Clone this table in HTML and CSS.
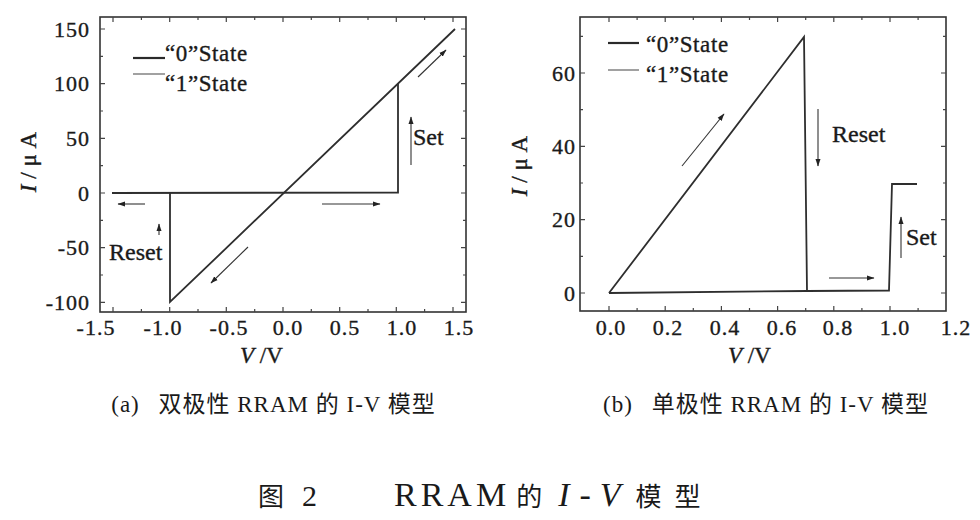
FILE: index.html
```html
<!DOCTYPE html>
<html lang="zh-CN">
<head>
<meta charset="utf-8">
<title>RRAM 的 I-V 模型</title>
<link rel="stylesheet" href="styles.css">
</head>
<body>
<div class="figure">
  <div class="panels">
    <div class="panel panel-a">
      <svg class="chart" width="490" height="380" viewBox="0 0 490 380">
        <defs>
          <marker id="ha" markerWidth="8" markerHeight="6" refX="7" refY="3" orient="auto" markerUnits="userSpaceOnUse">
            <path d="M0,0.5 L7.5,3 L0,5.5 z" class="head"/>
          </marker>
        </defs>
        <rect class="frame" x="100" y="17" width="366" height="295"/>
        <path class="ticks" d="M113 312v-5M169.7 312v-5M226.3 312v-5M283 312v-5M339.7 312v-5M396.3 312v-5M453 312v-5
          M141.4 312v-3M198 312v-3M254.7 312v-3M311.3 312v-3M368 312v-3M424.6 312v-3
          M113 17v5M169.7 17v5M226.3 17v5M283 17v5M339.7 17v5M396.3 17v5M453 17v5
          M141.4 17v3M198 17v3M254.7 17v3M311.3 17v3M368 17v3M424.6 17v3
          M100 29h5M100 83.7h5M100 138.3h5M100 193h5M100 247.7h5M100 302.3h5
          M100 56.3h3M100 111h3M100 165.7h3M100 220.3h3M100 275h3
          M466 29h-5M466 83.7h-5M466 138.3h-5M466 193h-5M466 247.7h-5M466 302.3h-5
          M466 56.3h-3M466 111h-3M466 165.7h-3M466 220.3h-3M466 275h-3"/>
        <g class="tick-y">
          <text x="90" y="37">150</text>
          <text x="90" y="91">100</text>
          <text x="90" y="145.8">50</text>
          <text x="90" y="200.5">0</text>
          <text x="90" y="255">-50</text>
          <text x="90" y="309.8">-100</text>
        </g>
        <g class="tick-x">
          <text x="96" y="335">-1.5</text>
          <text x="163" y="335">-1.0</text>
          <text x="229" y="335">-0.5</text>
          <text x="288" y="335">0.0</text>
          <text x="345" y="335">0.5</text>
          <text x="402" y="335">1.0</text>
          <text x="459" y="335">1.5</text>
        </g>
        <text class="axis-label" x="240" y="363"><tspan class="var">V</tspan> /V</text>
        <text class="axis-label" transform="translate(36 162) rotate(-90)" text-anchor="middle"><tspan class="var">I</tspan> / μ A</text>

        <path class="trace" d="M112 193 L398 192.5 L398 83.5"/>
        <path class="trace" d="M455 29 L170 302 L170 193"/>

        <line class="legend-0" x1="133" y1="58" x2="165" y2="58"/>
        <text class="legend" x="165" y="61">“0”State</text>
        <line class="legend-1" x1="133" y1="74" x2="165" y2="74"/>
        <text class="legend" x="165" y="91">“1”State</text>

        <line class="arrow" x1="145" y1="204" x2="118" y2="204" marker-end="url(#ha)"/>
        <line class="arrow" x1="322" y1="204" x2="380" y2="204" marker-end="url(#ha)"/>
        <line class="arrow" x1="411" y1="165" x2="411" y2="117" marker-end="url(#ha)"/>
        <line class="arrow" x1="159" y1="235" x2="159" y2="224" marker-end="url(#ha)"/>
        <line class="arrow" x1="418" y1="77" x2="446" y2="50" marker-end="url(#ha)"/>
        <line class="arrow" x1="248" y1="247" x2="211" y2="283" marker-end="url(#ha)"/>

        <text class="note" x="413" y="145">Set</text>
        <text class="note" x="109" y="260">Reset</text>
      </svg>
      <div class="caption"><span class="tag">(a)</span> 双极性 RRAM 的 I-V 模型</div>
    </div>
    <div class="panel panel-b">
      <svg class="chart" width="490" height="380" viewBox="0 0 490 380">
        <defs>
          <marker id="hb" markerWidth="8" markerHeight="6" refX="7" refY="3" orient="auto" markerUnits="userSpaceOnUse">
            <path d="M0,0.5 L7.5,3 L0,5.5 z" class="head"/>
          </marker>
        </defs>
        <rect class="frame" x="90" y="17" width="366" height="294"/>
        <path class="ticks" d="M119 311v-5M175.2 311v-5M231.4 311v-5M287.6 311v-5M343.8 311v-5M400 311v-5
          M147.1 311v-3M203.3 311v-3M259.5 311v-3M315.7 311v-3M371.9 311v-3M428.1 311v-3
          M119 17v5M175.2 17v5M231.4 17v5M287.6 17v5M343.8 17v5M400 17v5
          M147.1 17v3M203.3 17v3M259.5 17v3M315.7 17v3M371.9 17v3M428.1 17v3
          M90 293h5M90 219.7h5M90 146.3h5M90 73h5
          M90 256.3h3M90 183h3M90 109.7h3M90 36.3h3
          M456 293h-5M456 219.7h-5M456 146.3h-5M456 73h-5
          M456 256.3h-3M456 183h-3M456 109.7h-3M456 36.3h-3"/>
        <g class="tick-y">
          <text x="86" y="300.5">0</text>
          <text x="86" y="227.2">20</text>
          <text x="86" y="153.8">40</text>
          <text x="86" y="80.5">60</text>
        </g>
        <g class="tick-x">
          <text x="121" y="335">0.0</text>
          <text x="178" y="335">0.2</text>
          <text x="235" y="335">0.4</text>
          <text x="292" y="335">0.6</text>
          <text x="348" y="335">0.8</text>
          <text x="405" y="335">1.0</text>
          <text x="466" y="335">1.2</text>
        </g>
        <text class="axis-label" x="238" y="363"><tspan class="var">V</tspan> /V</text>
        <text class="axis-label" transform="translate(37 166) rotate(-90)" text-anchor="middle"><tspan class="var">I</tspan> / μ A</text>

        <path class="trace" d="M119 293 L314 37 L317 290.5"/>
        <path class="trace" d="M119 293 L317 291 L399 290.5 L402 184 L427 184"/>

        <line class="legend-0" x1="118" y1="43" x2="149" y2="43"/>
        <text class="legend" x="156" y="52">“0”State</text>
        <line class="legend-1" x1="118" y1="70" x2="149" y2="70"/>
        <text class="legend" x="156" y="82">“1”State</text>

        <line class="arrow" x1="192" y1="166" x2="234" y2="114" marker-end="url(#hb)"/>
        <line class="arrow" x1="328" y1="109" x2="328" y2="166" marker-end="url(#hb)"/>
        <line class="arrow" x1="339" y1="278" x2="384" y2="278" marker-end="url(#hb)"/>
        <line class="arrow" x1="411" y1="258" x2="411" y2="217" marker-end="url(#hb)"/>

        <text class="note" x="342" y="142">Reset</text>
        <text class="note" x="416" y="245">Set</text>
      </svg>
      <div class="caption"><span class="tag">(b)</span> 单极性 RRAM 的 I-V 模型</div>
    </div>
  </div>
  <div class="title">
    <span class="t-cjk t-fig">图</span>
    <span class="t-num">2</span>
    <span class="t-en">RRAM</span>
    <span class="t-cjk t-de">的</span>
    <span class="t-var t-i">I</span>
    <span class="t-dash">-</span>
    <span class="t-var t-v">V</span>
    <span class="t-cjk t-model">模型</span>
  </div>
</div>
</body>
</html>
```

FILE: styles.css
```css
html, body {
  margin: 0;
  padding: 0;
  background: #ffffff;
}

body {
  width: 980px;
  height: 520px;
  overflow: hidden;
  font-family: "Liberation Serif", "Noto Sans CJK SC", serif;
  color: #151515;
}

.figure {
  display: flex;
  flex-direction: column;
}

.panels {
  display: flex;
  flex-direction: row;
}

.panel {
  width: 490px;
  display: flex;
  flex-direction: column;
}

.chart {
  display: block;
}

.chart text {
  stroke: #1a1a1a;
  stroke-width: 0.35px;
}

.frame {
  fill: none;
  stroke: #333333;
  stroke-width: 1.6;
}

.ticks {
  fill: none;
  stroke: #444444;
  stroke-width: 1.2;
}

.tick-y text,
.tick-x text {
  font-family: "Liberation Serif", serif;
  font-size: 22px;
  letter-spacing: 1px;
  fill: #1a1a1a;
}

.tick-y text {
  text-anchor: end;
}

.tick-x text {
  text-anchor: middle;
}

.axis-label {
  font-family: "Liberation Serif", serif;
  font-size: 23px;
  fill: #1a1a1a;
}

.axis-label .var {
  font-style: italic;
}

.trace {
  fill: none;
  stroke: #2e2e2e;
  stroke-width: 1.8;
  stroke-linejoin: miter;
}

.legend-0 {
  stroke: #2a2a2a;
  stroke-width: 2.2;
}

.legend-1 {
  stroke: #555555;
  stroke-width: 1.1;
}

.legend {
  font-family: "Liberation Serif", serif;
  font-size: 23px;
  letter-spacing: 0.6px;
  fill: #1a1a1a;
}

.note {
  font-family: "Liberation Serif", serif;
  font-size: 24px;
  fill: #1a1a1a;
}

.arrow {
  stroke: #333333;
  stroke-width: 1.1;
}

.head {
  fill: #222222;
}

.caption {
  margin-top: 10px;
  height: 30px;
  line-height: 30px;
  font-size: 23px;
  letter-spacing: 1px;
  text-align: center;
  white-space: nowrap;
  color: #1a1a1a;
}

.panel-a .caption {
  padding-left: 57px;
}

.panel-b .caption {
  padding-left: 62px;
}

.caption .tag {
  margin-right: 12px;
}

.title {
  margin-top: 55px;
  padding-left: 258px;
  display: flex;
  flex-direction: row;
  align-items: baseline;
  line-height: 40px;
  height: 40px;
  color: #1a1a1a;
}

.t-cjk {
  font-family: "Noto Sans CJK SC", sans-serif;
  font-size: 26px;
}

.t-num {
  font-family: "Liberation Serif", serif;
  font-size: 30px;
  margin-left: 18px;
}

.t-en {
  font-family: "Liberation Serif", serif;
  font-size: 34px;
  letter-spacing: 4px;
  margin-left: 77px;
}

.t-de {
  margin-left: 6px;
}

.t-var {
  font-family: "Liberation Serif", serif;
  font-style: italic;
  font-size: 34px;
}

.t-i {
  margin-left: 16px;
}

.t-dash {
  font-family: "Liberation Serif", serif;
  font-size: 34px;
  margin-left: 10px;
}

.t-v {
  margin-left: 9px;
}

.t-model {
  margin-left: 15px;
  letter-spacing: 13px;
}
```
